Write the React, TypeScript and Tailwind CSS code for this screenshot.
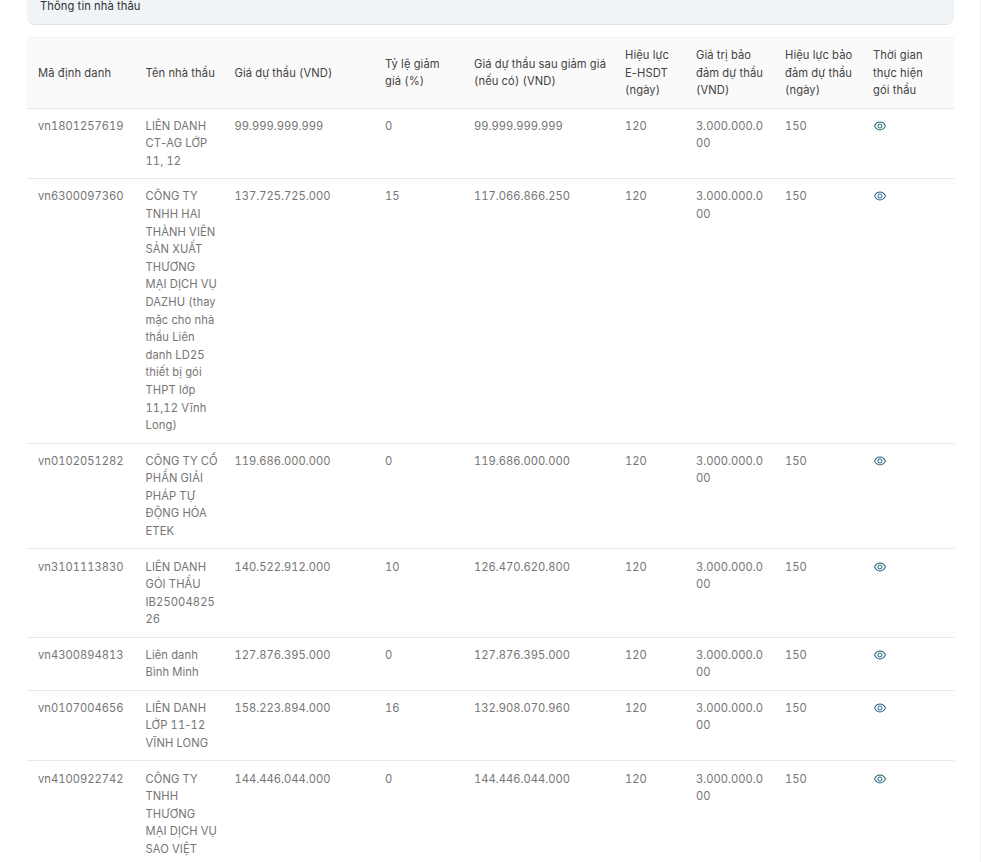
import { AiOutlineEye } from 'react-icons/ai';

const COLUMNS = [
  { title: 'Mã định danh', width: 'w-[107.5px]' },
  { title: 'Tên nhà thầu', width: 'w-[89px]' },
  { title: 'Giá dự thầu (VND)', width: 'w-[150.5px]' },
  { title: 'Tỷ lệ giảm giá (%)', width: 'w-[89px]' },
  { title: 'Giá dự thầu sau giảm giá (nếu có) (VND)', width: 'w-[151px]' },
  { title: 'Hiệu lực E-HSDT (ngày)', width: 'w-[71px]' },
  { title: 'Giá trị bảo đảm dự thầu (VND)', width: 'w-[89px]' },
  { title: 'Hiệu lực bảo đảm dự thầu (ngày)', width: 'w-[88px]' },
  { title: 'Thời gian thực hiện gói thầu', width: 'w-[92px]' },
];

const ROWS = [
  ['vn1801257619', 'LIÊN DANH CT-AG LỚP 11, 12', '99.999.999.999', '0', '99.999.999.999'],
  ['vn6300097360', 'CÔNG TY TNHH HAI THÀNH VIÊN SẢN XUẤT THƯƠNG MẠI DỊCH VỤ DAZHU (thay mặc cho nhà thầu Liên danh LD25 thiết bị gói THPT lớp 11,12 Vĩnh Long)', '137.725.725.000', '15', '117.066.866.250'],
  ['vn0102051282', 'CÔNG TY CỔ PHẦN GIẢI PHÁP TỰ ĐỘNG HÓA ETEK', '119.686.000.000', '0', '119.686.000.000'],
  ['vn3101113830', 'LIÊN DANH GÓI THẦU IB2500482526', '140.522.912.000', '10', '126.470.620.800'],
  ['vn4300894813', 'Liên danh Bình Minh', '127.876.395.000', '0', '127.876.395.000'],
  ['vn0107004656', 'LIÊN DANH LỚP 11-12 VĨNH LONG', '158.223.894.000', '16', '132.908.070.960'],
  ['vn4100922742', 'CÔNG TY TNHH THƯƠNG MẠI DỊCH VỤ SAO VIỆT', '144.446.044.000', '0', '144.446.044.000'],
];

// tabular-nums widens the hyphen in Inter, so it gets normal figures
function Text({ value }: { value: string }) {
  const parts = value.split('-');
  return (
    <>
      {parts.map((p, i) => (
        <span key={i}>
          {i > 0 && <span className="[font-variant-numeric:normal]">-</span>}
          {p}
        </span>
      ))}
    </>
  );
}

const CELL = 'pl-[11.5px] pr-[4.5px] pt-[9.1px] pb-[7.8px] [overflow-wrap:anywhere]';
const NUM_CELL = 'pl-[11.5px] pr-[4.5px] pt-[9.1px] pb-[7.8px] [overflow-wrap:anywhere] tracking-normal';

export default function App() {
  return (
    <div className="h-[862px] overflow-hidden bg-white font-['Inter',sans-serif] text-[11.2px] leading-[17.6px] tracking-[0.1px] tabular-nums">
      <div className="h-full w-[981px] border-r border-[#f3f3f3] pl-[26.5px] pr-[26.5px]">
        <div className="mb-[12px] h-[25px] rounded-b-lg border-b border-[#dfe2e5] bg-[#f1f4f6] pl-[13.5px] text-[#2b3138]">
          <div className="-translate-y-[2px]">Thông tin nhà thầu</div>
        </div>
        <table className="w-[927px] table-fixed border-collapse">
          <colgroup>
            {COLUMNS.map((c) => (
              <col key={c.title} className={c.width} />
            ))}
          </colgroup>
          <thead>
            <tr className="border-t border-b border-t-[#f5f5f5] border-b-[#e4e4e4] bg-[#fafafa]">
              {COLUMNS.map((c, i) => (
                <th key={c.title} className={`h-[70px] text-left font-normal text-[#434343] ${CELL} ${i === 8 ? 'pr-[16px]' : ''}`}>
                  <Text value={c.title} />
                </th>
              ))}
            </tr>
          </thead>
          <tbody>
            {ROWS.map((r) => (
              <tr key={r[0]} className="border-b border-[#e8e8e8] align-top text-[#757575]">
                {r.map((cell, i) => (
                  <td key={i} className={i === 1 ? CELL : NUM_CELL}>
                    <Text value={cell} />
                  </td>
                ))}
                <td className={NUM_CELL}>120</td>
                <td className={NUM_CELL}>3.000.000.000</td>
                <td className={NUM_CELL}>150</td>
                <td className={CELL}>
                  <AiOutlineEye className="mt-[1px] h-[14px] w-[14px] text-[#1f5c7a]" />
                </td>
              </tr>
            ))}
          </tbody>
        </table>
      </div>
    </div>
  );
}
